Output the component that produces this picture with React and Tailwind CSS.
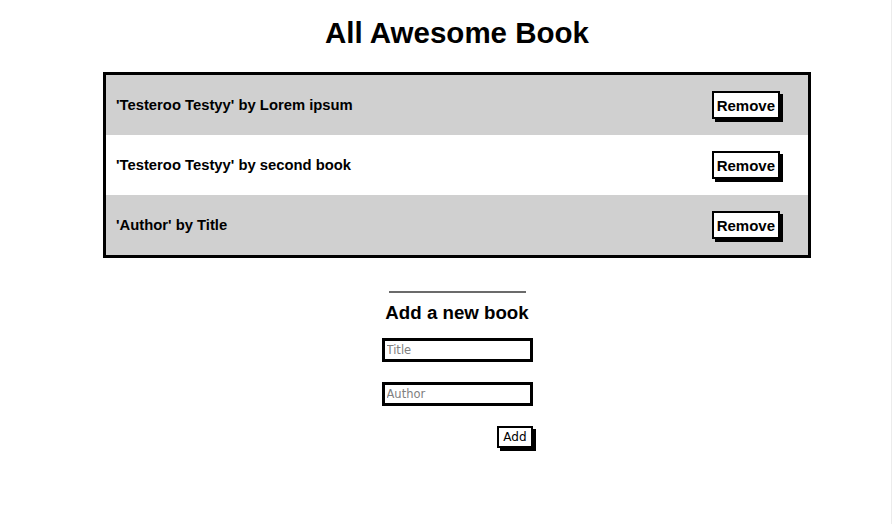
export default function App() {
  const books = [
    { title: "Testeroo Testyy", author: "Lorem ipsum" },
    { title: "Testeroo Testyy", author: "second book" },
    { title: "Author", author: "Title" },
  ];

  return (
    <div className="w-[892px] h-[524px] bg-white border-r border-[#ececec] font-['Liberation_Sans',Arial,sans-serif] text-black">
      <div className="w-[708px] ml-[103px] flex flex-col items-center">
        <h1 className="mt-[16px] text-[29.5px] leading-[33px] font-bold">All Awesome Book</h1>

        {/* book list */}
        <ul className="mt-[23px] w-full border-[3px] border-black">
          {books.map((b, i) => (
            <li
              key={i}
              className={`h-[60px] flex items-center justify-between pl-[10px] pr-[28px] ${
                i % 2 === 0 ? "bg-[#d0d0d0]" : "bg-white"
              }`}
            >
              <span className="text-[14.8px] font-bold">
                '{b.title}' by {b.author}
              </span>
              <button className="h-[28px] px-[3px] bg-white border-2 border-black shadow-[3px_3px_0_#000] text-[15px] font-bold leading-none">
                Remove
              </button>
            </li>
          ))}
        </ul>

        {/* add form */}
        <form className="mt-[33px] flex flex-col items-center">
          <div className="w-[137px] h-[2px] bg-[#6b6b6b]" />
          <h3 className="mt-[9px] text-[18.7px] leading-[22px] font-bold">Add a new book</h3>
          <div className="mt-[14px] w-[151px] flex flex-col gap-[20px]">
            <input
              placeholder="Title"
              className="h-[24px] w-[151px] border-[3px] border-black px-[2px] text-[11.5px] font-['DejaVu_Sans',sans-serif] placeholder:text-[#808080] outline-none"
            />
            <input
              placeholder="Author"
              className="h-[24px] w-[151px] border-[3px] border-black px-[2px] text-[11.5px] font-['DejaVu_Sans',sans-serif] placeholder:text-[#808080] outline-none"
            />
            <button
              type="button"
              className="self-end h-[22px] px-[4px] bg-white border-2 border-black shadow-[3px_3px_0_#000] text-[12px] leading-none font-['DejaVu_Sans',sans-serif]"
            >
              Add
            </button>
          </div>
        </form>
      </div>
    </div>
  );
}
